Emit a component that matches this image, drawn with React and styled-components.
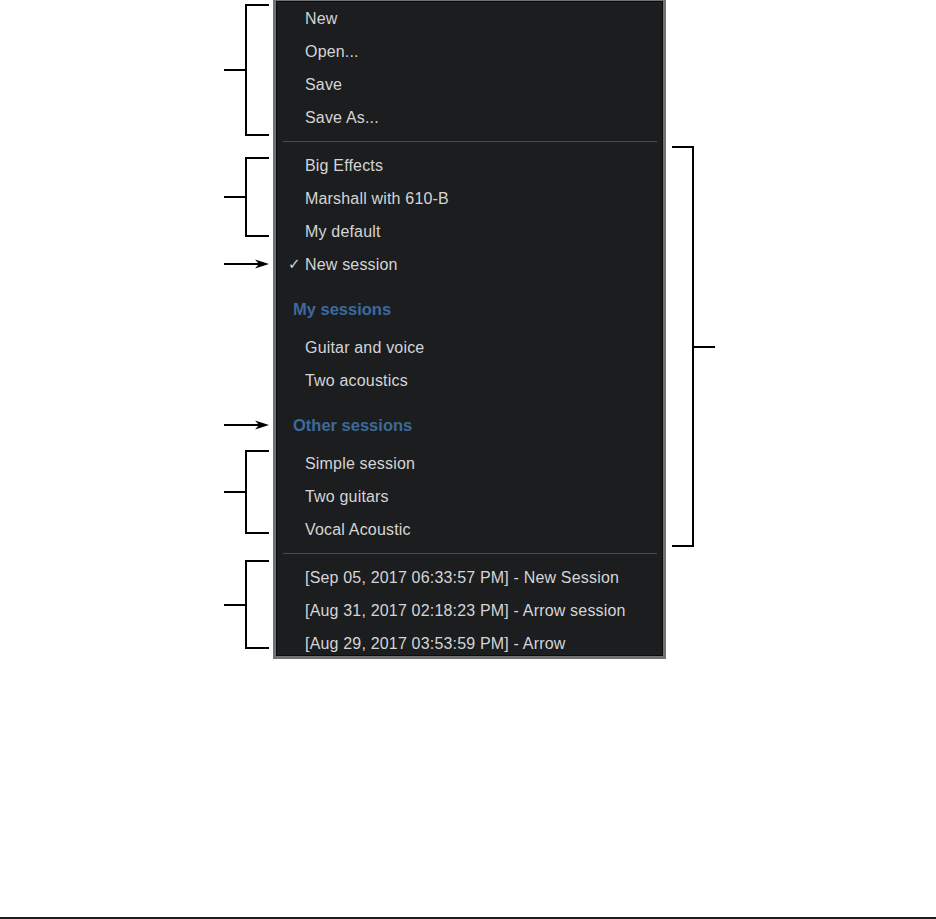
import React from "react";
import styled, { createGlobalStyle } from "styled-components";

const GlobalStyle = createGlobalStyle`
  html, body { margin: 0; padding: 0; background: #ffffff; }
  * { box-sizing: border-box; }
`;

const Page = styled.div`
  height: 919px;
  display: flex;
  flex-direction: column;
  background: #ffffff;
`;

const Stage = styled.div`
  display: flex;
  align-items: flex-start;
`;

const Notes = styled.svg`
  display: block;
  flex: none;
  width: ${(p) => p.$w}px;
  height: 659px;
`;

const Menu = styled.div`
  flex: none;
  width: 393px;
  height: 659px;
  background: #1c1d1f;
  border: 3px solid #707376;
  border-top-width: 1px;
  box-shadow: inset 0 0 0 1px #0c0c0d;
  overflow: hidden;
  padding-top: 1px;
  font-family: "Liberation Sans", Arial, Helvetica, sans-serif;
`;

const Item = styled.div`
  display: grid;
  grid-template-columns: 17px 1fr;
  padding-left: 12px;
  height: 33px;
  line-height: 33px;
  font-size: 16px;
  letter-spacing: 0.18px;
  color: #d4d5d6;
  white-space: nowrap;
`;

const Check = styled.span`
  font-family: "DejaVu Sans", sans-serif;
  font-size: 15px;
  letter-spacing: 0;
  color: #d4d5d6;
`;

const Header = styled.div`
  padding: 12px 0 5px 17px;
  line-height: 33px;
  font-size: 16.5px;
  font-weight: 700;
  color: #3d6a9b;
  white-space: nowrap;
`;

const Separator = styled.div`
  height: 1px;
  margin: 7px 6px 7px 7px;
  background: #4a4b4e;
`;

const BottomRule = styled.div`
  margin-top: auto;
  height: 2px;
  background: #1f1f1f;
`;

const Bracket = ({ x, armX, top, bottom, tickX }) => {
  const mid = Math.round((top + bottom) / 2);
  return (
    <g stroke="#000" strokeWidth="2" fill="none" shapeRendering="crispEdges">
      <path d={`M${armX} ${top} H${x} V${bottom} H${armX}`} />
      <path d={`M${tickX} ${mid} H${x}`} />
    </g>
  );
};

const Arrow = ({ y }) => (
  <g>
    <path d={`M224 ${y} H260`} stroke="#000" strokeWidth="2" shapeRendering="crispEdges" />
    <path d={`M269 ${y} L255 ${y - 4.5} L259 ${y} L255 ${y + 4.5} Z`} fill="#000" />
  </g>
);

const groups = [
  { type: "item", label: "New" },
  { type: "item", label: "Open..." },
  { type: "item", label: "Save" },
  { type: "item", label: "Save As..." },
  { type: "sep" },
  { type: "item", label: "Big Effects" },
  { type: "item", label: "Marshall with 610-B" },
  { type: "item", label: "My default" },
  { type: "item", label: "New session", checked: true },
  { type: "header", label: "My sessions" },
  { type: "item", label: "Guitar and voice" },
  { type: "item", label: "Two acoustics" },
  { type: "header", label: "Other sessions" },
  { type: "item", label: "Simple session" },
  { type: "item", label: "Two guitars" },
  { type: "item", label: "Vocal Acoustic" },
  { type: "sep" },
  { type: "item", label: "[Sep 05, 2017 06:33:57 PM] - New Session" },
  { type: "item", label: "[Aug 31, 2017 02:18:23 PM] - Arrow session" },
  { type: "item", label: "[Aug 29, 2017 03:53:59 PM] - Arrow" },
];

export default function App() {
  return (
    <>
      <GlobalStyle />
      <Page>
        <Stage>
          <Notes $w={273} viewBox="0 0 273 659">
            <Bracket x={246} armX={269} top={5} bottom={135} tickX={224} />
            <Bracket x={246} armX={269} top={158} bottom={236} tickX={224} />
            <Arrow y={264} />
            <Arrow y={425} />
            <Bracket x={246} armX={269} top={451} bottom={533} tickX={224} />
            <Bracket x={246} armX={269} top={561} bottom={648} tickX={224} />
          </Notes>
          <Menu>
            {groups.map((g, i) => {
              if (g.type === "sep") return <Separator key={i} />;
              if (g.type === "header") return <Header key={i}>{g.label}</Header>;
              return (
                <Item key={i}>
                  <Check>{g.checked ? "✓" : ""}</Check>
                  <span>{g.label}</span>
                </Item>
              );
            })}
          </Menu>
          <Notes $w={70} viewBox="0 0 70 659">
            <g stroke="#000" strokeWidth="2" fill="none" shapeRendering="crispEdges">
              <path d="M6 147 H27 V546 H6" />
              <path d="M27 347 H49" />
            </g>
          </Notes>
        </Stage>
        <BottomRule />
      </Page>
    </>
  );
}
